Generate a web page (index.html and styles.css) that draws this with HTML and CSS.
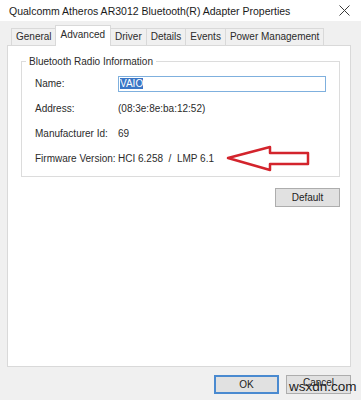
FILE: index.html
```html
<!DOCTYPE html>
<html lang="en">
<head>
    <meta charset="UTF-8">
    <meta name="viewport" content="width=device-width, initial-scale=1.0">
    <title>Adapter Properties</title>
    <link rel="stylesheet" href="styles.css">
</head>
<body>

    <div class="window">
        <div class="titlebar">
            <span class="title">Qualcomm Atheros AR3012 Bluetooth(R) Adapter Properties</span>
            <svg class="close" width="11" height="11" viewBox="0 0 11 11">
                <path d="M0.5 0.5 L10.5 10.5 M10.5 0.5 L0.5 10.5" stroke="#3a3a3a" stroke-width="1" fill="none"/>
            </svg>
        </div>

        <div class="client">
            <div class="tabs">
                <div class="tab">General</div>
                <div class="tab active">Advanced</div>
                <div class="tab">Driver</div>
                <div class="tab">Details</div>
                <div class="tab">Events</div>
                <div class="tab">Power Management</div>
            </div>

            <div class="panel">
                <fieldset class="group">
                    <legend>Bluetooth Radio Information</legend>
                    <div class="row">
                        <span class="label">Name:</span>
                        <span class="field"><span class="selected">VAIO</span></span>
                    </div>
                    <div class="row">
                        <span class="label">Address:</span>
                        <span class="value">(08:3e:8e:ba:12:52)</span>
                    </div>
                    <div class="row">
                        <span class="label">Manufacturer Id:</span>
                        <span class="value">69</span>
                    </div>
                    <div class="row">
                        <span class="label">Firmware Version:</span>
                        <span class="value">HCI 6.258 &nbsp;/ &nbsp;LMP 6.1</span>
                        <svg class="arrow" width="86" height="28" viewBox="0 0 86 28">
                            <path d="M2 13 L44 2 L44 8 L82 8 L82 19 L44 19 L44 25 Z" stroke="#d3242c" stroke-width="2.5" stroke-linejoin="round" fill="none"/>
                        </svg>
                    </div>
                </fieldset>

                <div class="panel-actions">
                    <button class="btn">Default</button>
                </div>
            </div>

            <div class="dialog-actions">
                <button class="btn primary">OK</button>
                <button class="btn cancel">Cancel</button>
            </div>
        </div>

        <span class="watermark">wsxdn.com</span>
    </div>

</body>
</html>
```

FILE: styles.css
```css
body {
    margin: 0;
    font-family: 'Liberation Sans', Arial, sans-serif;
    font-size: 10px;
    color: #2b2b2b;
    background-color: #f0f0f0;
}

.window {
    position: relative;
    width: 361px;
    height: 400px;
    overflow: hidden;
    background-color: #f0f0f0;
}

.titlebar {
    display: flex;
    align-items: center;
    justify-content: space-between;
    height: 21px;
    padding: 0 11px 0 9px;
    background-color: #fff;
    color: #1a1a1a;
    font-size: 10.5px;
}

.client {
    padding: 5px 10px 0 7px;
}

.tabs {
    display: flex;
    align-items: flex-end;
    height: 20px;
    margin: 0 0 -1px 4px;
    position: relative;
}

.tab {
    height: 16px;
    line-height: 16px;
    padding: 0 4px;
    margin-bottom: 1px;
    border: 1px solid #d9d9d9;
    border-bottom: none;
    margin-right: -1px;
    background-color: #f0f0f0;
}

.tab.active {
    height: 20px;
    line-height: 18px;
    padding: 0 5px;
    margin: 0 -1px 0 -1px;
    background-color: #fff;
    position: relative;
    z-index: 1;
}

.panel {
    height: 310px;
    padding: 10px 10px 0 13px;
    background-color: #fff;
    border: 1px solid #d9d9d9;
}

.group {
    margin: 0;
    padding: 4px 13px 5px 13px;
    border: 1px solid #dcdcdc;
}

.group legend {
    margin-left: -9px;
    padding: 0 3px;
}

.row {
    display: flex;
    align-items: center;
    height: 25px;
}

.label {
    width: 83px;
    flex-shrink: 0;
}

.field {
    flex: 1;
    height: 14px;
    line-height: 14px;
    padding: 0 1px;
    border: 1px solid #7fb0de;
}

.selected {
    background-color: #3a76c6;
    color: #fff;
}

.arrow {
    margin-left: 12px;
}

.panel-actions {
    display: flex;
    justify-content: flex-end;
    margin-top: 11px;
}

.btn {
    width: 65px;
    height: 19px;
    padding: 0;
    font-family: inherit;
    font-size: 10px;
    color: #222;
    background-color: #e1e1e1;
    border: 1px solid #adadad;
}

.btn.primary {
    border: 2px solid #4a8ad0;
}

.btn.cancel {
    padding-bottom: 4px;
}

.dialog-actions {
    display: flex;
    justify-content: flex-end;
    gap: 7px;
    margin-top: 8px;
}

.watermark {
    position: absolute;
    left: 289px;
    top: 379px;
    font-size: 13.5px;
    color: #1c1c1c;
}
```
